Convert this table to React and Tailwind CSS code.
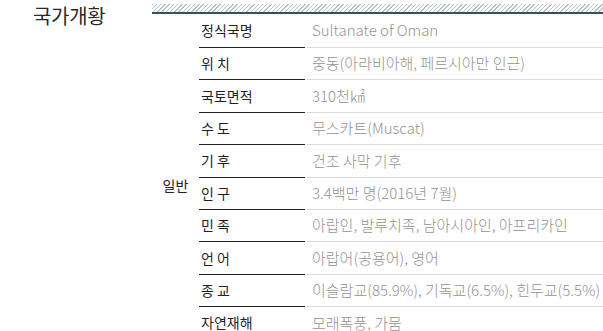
import React from "react";

const rows = [
  ["정식국명", "Sultanate of Oman"],
  ["위 치", "중동(아라비아해, 페르시아만 인근)"],
  ["국토면적", "310천㎢"],
  ["수 도", "무스카트(Muscat)"],
  ["기 후", "건조 사막 기후"],
  ["인 구", "3.4백만 명(2016년 7월)"],
  ["민 족", "아랍인, 발루치족, 남아시아인, 아프리카인"],
  ["언 어", "아랍어(공용어), 영어"],
  ["종 교", "이슬람교(85.9%), 기독교(6.5%), 힌두교(5.5%)"],
  ["자연재해", "모래폭풍, 가뭄"],
];

export default function App() {
  return (
    <div
      className="w-[603px] h-[331px] overflow-hidden bg-white flex items-start"
      style={{ fontFamily: '"Noto Sans CJK KR", "Noto Sans", sans-serif' }}
    >
      <div className="w-[152px] shrink-0 pl-[33px] pt-[2px]">
        <div className="text-[20px] leading-[28px] text-[#2a2a2a] tracking-[-0.3px]">국가개황</div>
      </div>
      <div className="flex-1 flex flex-col pt-[4px]">
        <div className="h-[10px] shrink-0 border-b-2 border-[#3d4e5b] bg-[image:repeating-linear-gradient(135deg,#b4c2cc_0px,#b4c2cc_1px,#ffffff_1px,#ffffff_3px)]" />
        <div className="flex shrink-0">
          <div className="w-[47px] shrink-0 flex items-center justify-center pt-[18px]">
            <span className="text-[14px] text-[#222]">일반</span>
          </div>
          <div className="flex-1 flex flex-col">
            {rows.map(([k, v], i) => (
              <div key={i} className={`flex shrink-0 ${i === 0 ? "h-[34px]" : "h-[32.4px]"}`}>
                <div className="w-[106px] shrink-0 border-b border-[#222] flex items-center pl-[2px] text-[14px] text-[#1f1f1f]">
                  {k}
                </div>
                <div className="flex-1 ml-[2px] border-b border-[#dcdcdc] flex items-center pl-[5px] text-[15px] font-light text-[#939393] whitespace-nowrap">
                  {v}
                </div>
              </div>
            ))}
          </div>
        </div>
      </div>
    </div>
  );
}
